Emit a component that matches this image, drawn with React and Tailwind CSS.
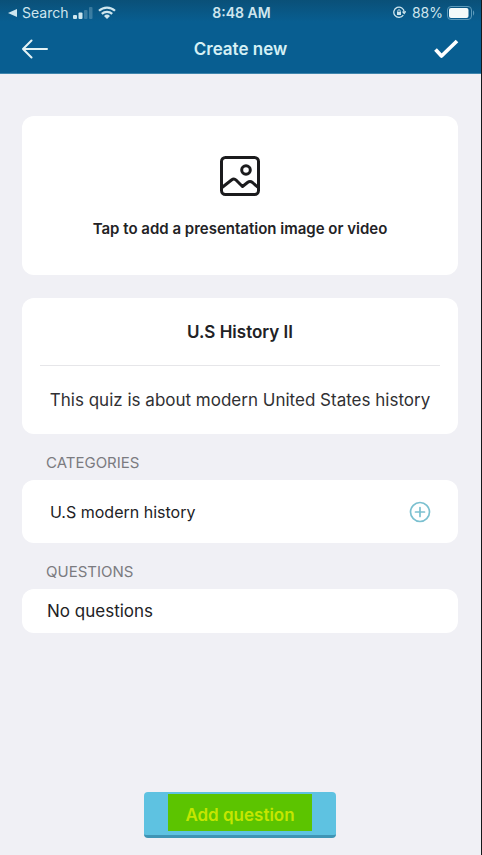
import React from "react";

function StatusBar() {
  return (
    <div className="grid grid-cols-3 items-center h-[25px] pl-2 pr-[6px] text-[14px] leading-5 text-[#cfe6ee]">
      <div className="flex items-center gap-[5px]">
        <svg className="w-[9px] h-2 shrink-0" viewBox="0 0 9 8" fill="currentColor" aria-hidden="true">
          <path d="M9 0v8L0 4z" />
        </svg>
        <span>Search</span>
        <svg className="w-5 h-3 shrink-0" viewBox="0 0 20 12" fill="currentColor" aria-hidden="true">
          <rect x="0" y="8" width="4" height="4" rx="1" />
          <rect x="5.500" y="5.500" width="4" height="6.500" rx="1" />
          <rect x="11" y="3" width="3.500" height="9" rx="1" opacity="0.25" />
          <rect x="16" y="0" width="3.500" height="12" rx="1" opacity="0.25" />
        </svg>
        <svg className="w-[18px] h-[13px] shrink-0" viewBox="0 0 18 13" fill="none" stroke="currentColor" strokeWidth="2.200" aria-hidden="true">
          <path d="M1 4.800a11.500 11.500 0 0 1 16 0" />
          <path d="M3.800 7.900a7.500 7.500 0 0 1 10.400 0" />
          <path d="M9 13L6 10a4.300 4.300 0 0 1 6 0z" fill="currentColor" stroke="none" />
        </svg>
      </div>
      <span className="text-center font-semibold">8:48 AM</span>
      <div className="flex items-center justify-end gap-1">
        <svg className="w-[13px] h-[13px] mr-[2px] shrink-0" viewBox="0 0 13 12" fill="none" stroke="currentColor" strokeWidth="1.300" aria-hidden="true">
          <path d="M10.300 8.700A5.200 5.200 0 1 1 11.200 5.500" />
          <path d="M9.600 5l1.600 2L12.600 4.800" />
          <rect x="4" y="5.400" width="4" height="3.100" fill="currentColor" stroke="none" />
          <path d="M4.800 5.500V4.400a1.200 1.200 0 0 1 2.400 0v1.100" strokeWidth="0.900" />
        </svg>
        <span>88%</span>
        <svg className="w-7 h-[14px] shrink-0" viewBox="0 0 28 14" aria-hidden="true">
          <rect x="0.500" y="0.500" width="24" height="13" rx="3.500" fill="none" stroke="#5c9abb" />
          <rect x="2" y="2" width="19.500" height="10" rx="2" fill="#f4fafa" />
          <path d="M26 4.500c1.600.6 1.600 4.400 0 5z" fill="#5c9abb" />
        </svg>
      </div>
    </div>
  );
}

function NavBar() {
  return (
    <nav className="flex items-center justify-between h-12 px-[22px]">
      <button type="button" aria-label="Back" className="text-[#e4f3f5]">
        <svg className="w-[26px] h-5" viewBox="0 0 26 20" fill="none" stroke="currentColor" strokeWidth="2" strokeLinecap="round" strokeLinejoin="round">
          <path d="M25 10H1M9.500 1.500L1 10l8.500 8.500" />
        </svg>
      </button>
      <h1 className="text-[17px] leading-6 font-semibold text-[#d5f0f5]">Create new</h1>
      <button type="button" aria-label="Save" className="text-white">
        <svg className="w-[26px] h-5" viewBox="0 0 26 20" fill="none" stroke="currentColor" strokeWidth="3.700" strokeLinejoin="round">
          <path d="M2.500 10.500l6 6.500L24 2" />
        </svg>
      </button>
    </nav>
  );
}

function SectionLabel({ children }) {
  return <h2 className="pl-6 text-[15px] leading-5 text-[#7b7b80]">{children}</h2>;
}

export default function App() {
  return (
    <div
      className="flex flex-col min-h-screen border-r border-[#16181b] bg-[#f0f0f5] text-[#222225] font-['Inter','Liberation_Sans',sans-serif]"
    >
      <header className="bg-linear-to-b from-[#0a5078] to-[#085e91] to-30% border-b border-[#3f86ad]">
        <StatusBar />
        <NavBar />
      </header>

      <main className="flex flex-col grow pl-[22px] pr-[23px] pt-[42px] pb-[17px]">
        <button type="button" className="flex flex-col items-center gap-[21px] pt-10 pb-[34px] rounded-xl bg-white">
          <svg className="w-10 h-10" viewBox="0 0 40 40" fill="none" stroke="#1b1b1d" strokeWidth="3" strokeLinecap="round" strokeLinejoin="round" aria-hidden="true">
            <rect x="1.500" y="1.500" width="37" height="37" rx="4" />
            <circle cx="26" cy="14" r="4.300" />
            <path d="M2 31.500L11.500 24q2.500-2 4.500 0l6.500 6.500 5-4q2.500-2 5 0l5 4.500" />
          </svg>
          <span className="text-[15px] leading-6 font-semibold">Tap to add a presentation image or video</span>
        </button>

        <div className="flex flex-col mt-[23px] px-[18px] rounded-xl bg-white">
          <input
            type="text"
            aria-label="Quiz title"
            defaultValue="U.S History II"
            className="w-full h-[68px] border-b border-[#e6e6e9] bg-transparent text-center text-[17px] font-semibold outline-none"
          />
          <input
            type="text"
            aria-label="Quiz description"
            defaultValue="This quiz is about modern United States history"
            className="w-full h-[68px] bg-transparent text-center text-[17px] text-[#303033] outline-none"
          />
        </div>

        <section className="flex flex-col gap-[7px] mt-[19px]">
          <SectionLabel>CATEGORIES</SectionLabel>
          <div className="flex items-center justify-between h-[63px] pl-7 pr-[27px] rounded-xl bg-white">
            <span className="text-[16px] leading-6">U.S modern history</span>
            <button type="button" aria-label="Add category" className="text-[#7bc0d0]">
              <svg className="w-[22px] h-[22px]" viewBox="0 0 22 22" fill="none" stroke="currentColor" strokeWidth="1.700" strokeLinecap="round">
                <circle cx="11" cy="11" r="9.500" />
                <path d="M11 6.500v9M6.500 11h9" />
              </svg>
            </button>
          </div>
        </section>

        <section className="flex flex-col gap-[7px] mt-[19px]">
          <SectionLabel>QUESTIONS</SectionLabel>
          <p className="h-11 pl-[25px] rounded-xl bg-white text-[17px] leading-[44px]">No questions</p>
        </section>

        <button
          type="button"
          className="self-center mt-auto flex justify-center w-48 pt-[2px] pb-1 rounded-sm border-b-3 border-[#3f95b5] bg-[#5ec2e1]"
        >
          <span className="px-[17px] pt-[9px] pb-1 bg-[#5cc400] text-[17px] leading-6 font-semibold text-[#c5e600]">Add question</span>
        </button>
      </main>
    </div>
  );
}
